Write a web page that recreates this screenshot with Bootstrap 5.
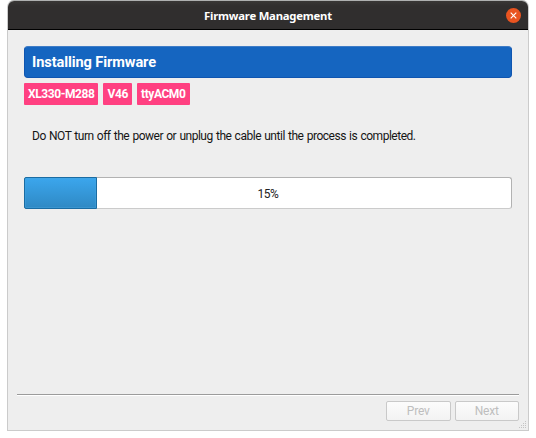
<!DOCTYPE html>
<html lang="en">
<head>
<meta charset="utf-8">
<meta name="viewport" content="width=device-width, initial-scale=1">
<title>Firmware Management</title>
<link href="https://cdn.jsdelivr.net/npm/bootstrap@5.3.0/dist/css/bootstrap.min.css" rel="stylesheet">
<style>
body{font-family:Roboto,sans-serif;font-size:12px;line-height:16px;color:#151515;background:#fff;overflow:hidden}
.fw-window{width:522px;height:431px;margin-left:7px;background:#eee;border:1px solid #cbcbcb;border-top-color:#aeb0b0;border-radius:7px 7px 0 0;overflow:hidden}
.title-bar{height:29px;background:linear-gradient(#393736,#302e2e 5px);border-bottom:1px solid #000;color:#fff;flex:none}
.title-text{font:700 11.3px/28px "Noto Sans","Open Sans",sans-serif;letter-spacing:-.22px;padding-top:2px;white-space:nowrap}
.close-x{right:7px;top:7px;width:15px;height:15px;line-height:0}
.close-x svg{display:block}
.content-area{padding:16px 16px 0}
.banner{height:32px;background:#1565c0;border:1px solid #0f55b0;border-top-color:#3f7cc6;border-radius:4px;padding:2px 7px 0;font-size:14.6px;letter-spacing:-.1px;font-weight:700}
.tags{gap:5px;margin-top:5px}
.tag{height:21.5px;background:#ff4081;border-radius:1px;font-size:12px;font-weight:700;letter-spacing:-.42px;color:#fff;line-height:22px;padding:0 0 0 4px;white-space:nowrap}
.tag-model{width:74px}.tag-version{width:29px;padding-left:4.5px;letter-spacing:-.3px}.tag-port{width:52.5px}
.notice{margin:23.5px 0 0 8px;white-space:nowrap;letter-spacing:-.48px;word-spacing:.7px}
.install-progress{height:32px;margin-top:33px;background:#fff;border:1px solid #b2b2b2;border-bottom-color:#cbcbcb;border-radius:3px;overflow:visible;font-size:12px}
.install-progress .progress-bar{background:linear-gradient(#3ba6ed,#2f89c4);border:1px solid #1a6ca3;border-radius:2px 0 0 2px;margin:-1px 0 -1px -1px;box-shadow:inset 0 0 0 1px #48a5df66}
.percent{inset:1px 0 0;color:#222;letter-spacing:-.5px}
.rule{height:2px;margin:0 9px;background:#9b9b9b;border-bottom:1px solid #fff}
.actions{gap:4px;padding:5px 9px 9px}
.actions .btn{--bs-btn-disabled-opacity:1;width:64.5px;height:20px;padding:0;font-size:12px;letter-spacing:-.15px;line-height:19px;color:#bebebe;background:linear-gradient(#fcfcfc,#f3f3f3);border:1px solid #c9c9c9;border-radius:2px}
.grip{right:1px;bottom:1px}
.grip svg{display:block}
</style>
</head>
<body>
<main class="fw-window position-relative d-flex flex-column">
  <header class="title-bar position-relative d-flex justify-content-center align-items-center">
    <span class="title-text">Firmware Management</span>
    <button class="close-x position-absolute border-0 bg-transparent p-0" type="button" aria-label="Close">
      <svg width="15" height="15" viewBox="0 0 15 15"><circle cx="7.5" cy="7.5" r="7.5" fill="#e95420"/><path d="M4.7 4.7l5.6 5.6M10.3 4.7l-5.6 5.6" stroke="#fff" stroke-width="1.1"/></svg>
    </button>
  </header>
  <section class="content-area flex-grow-1">
    <h1 class="banner text-white d-flex align-items-center m-0"><span>Installing Firmware</span></h1>
    <div class="tags d-flex">
      <span class="tag tag-model">XL330-M288</span><span class="tag tag-version">V46</span><span class="tag tag-port">ttyACM0</span>
    </div>
    <p class="notice">Do NOT turn off the power or unplug the cable until the process is completed.</p>
    <div class="install-progress progress position-relative" role="progressbar" aria-valuenow="15" aria-valuemin="0" aria-valuemax="100">
      <div class="progress-bar" style="width:15%"></div>
      <span class="percent position-absolute d-flex align-items-center justify-content-center">15%</span>
    </div>
  </section>
  <div class="rule"></div>
  <footer class="actions d-flex justify-content-end">
    <button class="btn" disabled>Prev</button>
    <button class="btn" disabled>Next</button>
  </footer>
  <div class="grip position-absolute"><svg width="8" height="8" viewBox="0 0 8 8"><path d="M6 .5h1M4 2.5h1M6 2.5h1M2 4.5h1M4 4.5h1M6 4.5h1M0 6.5h1M2 6.5h1M4 6.5h1M6 6.5h1" stroke="#c4c4c4"/></svg></div>
</main>
<script src="https://cdn.jsdelivr.net/npm/bootstrap@5.3.0/dist/js/bootstrap.bundle.min.js"></script>
</body>
</html>
